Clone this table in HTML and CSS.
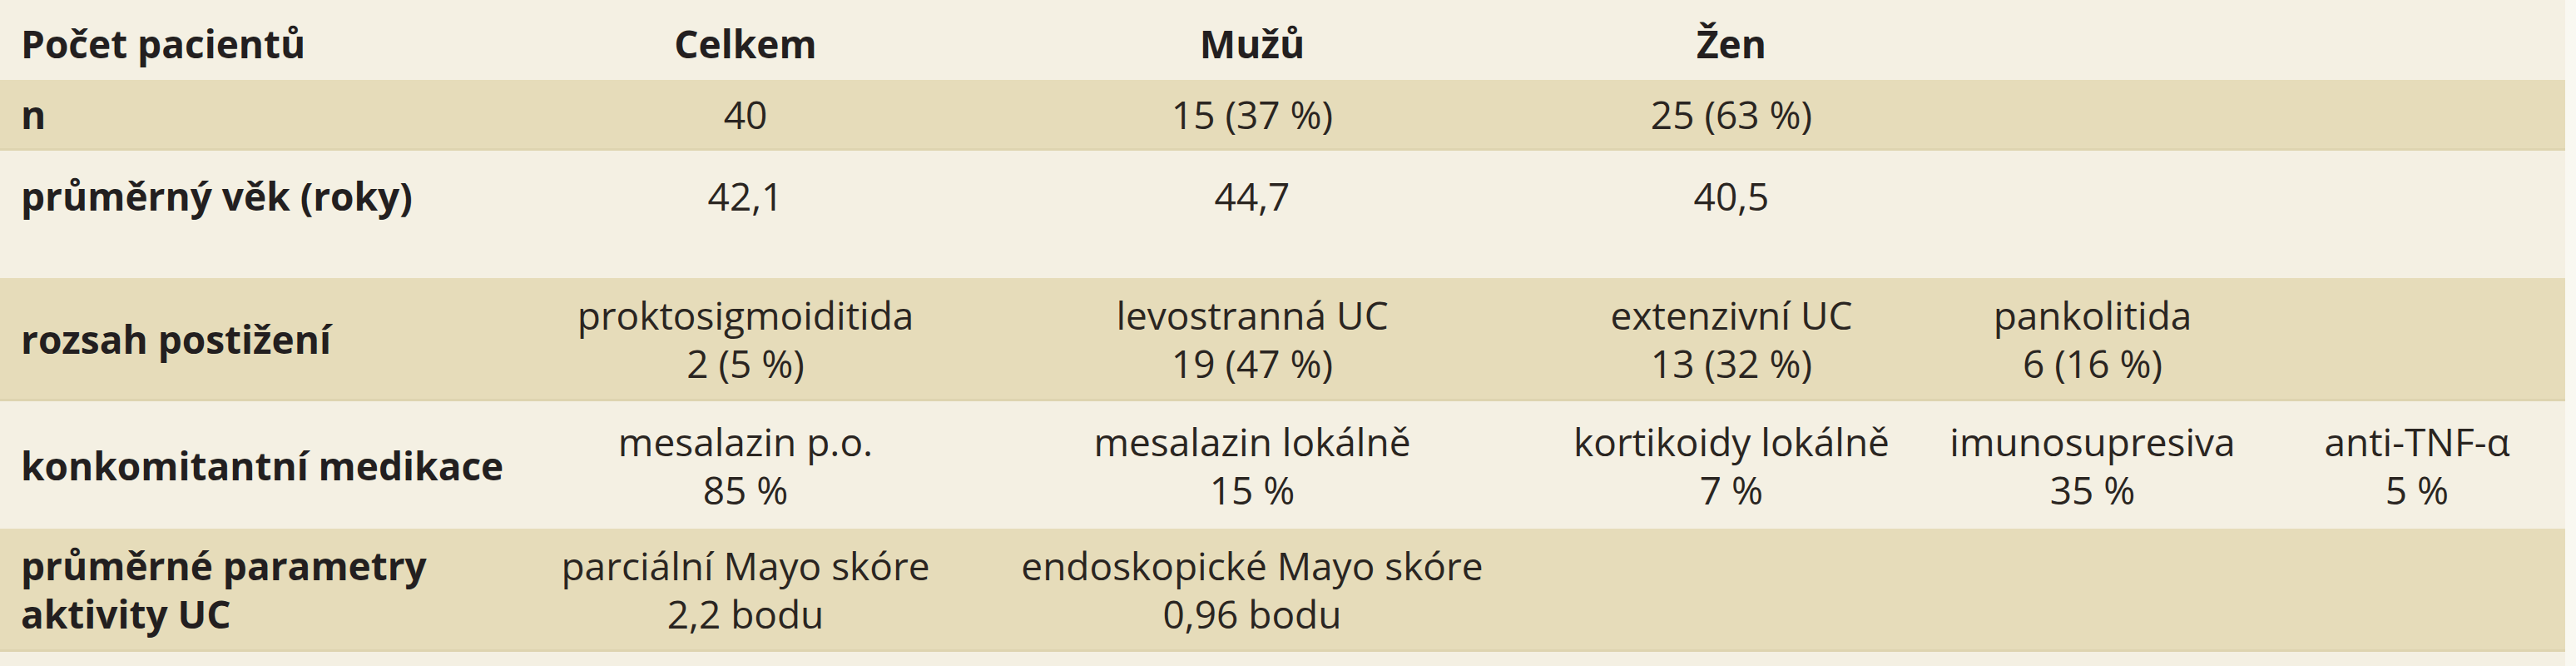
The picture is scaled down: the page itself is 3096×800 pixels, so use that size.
FILE: index.html
```html
<!DOCTYPE html>
<html lang="cs">
<head>
<meta charset="utf-8">
<title>Počet pacientů</title>
<link rel="stylesheet" href="styles.css">
</head>
<body>
<div class="table">
  <div class="row r-head light">
    <div class="cell label">Počet pacientů</div>
    <div class="cell head">Celkem</div>
    <div class="cell head">Mužů</div>
    <div class="cell head">Žen</div>
    <div class="cell"></div>
    <div class="cell"></div>
  </div>
  <div class="row r-n band">
    <div class="cell label">n</div>
    <div class="cell">40</div>
    <div class="cell">15 (37 %)</div>
    <div class="cell">25 (63 %)</div>
    <div class="cell"></div>
    <div class="cell"></div>
  </div>
  <div class="row r-age light">
    <div class="cell label">průměrný věk (roky)</div>
    <div class="cell">42,1</div>
    <div class="cell">44,7</div>
    <div class="cell">40,5</div>
    <div class="cell"></div>
    <div class="cell"></div>
  </div>
  <div class="row r-gap light"></div>
  <div class="row r-two band">
    <div class="cell label">rozsah postižení</div>
    <div class="cell">proktosigmoiditida<br>2 (5 %)</div>
    <div class="cell">levostranná UC<br>19 (47 %)</div>
    <div class="cell">extenzivní UC<br>13 (32 %)</div>
    <div class="cell">pankolitida<br>6 (16 %)</div>
    <div class="cell"></div>
  </div>
  <div class="row r-med light">
    <div class="cell label">konkomitantní medikace</div>
    <div class="cell">mesalazin p.o.<br>85 %</div>
    <div class="cell">mesalazin lokálně<br>15 %</div>
    <div class="cell">kortikoidy lokálně<br>7 %</div>
    <div class="cell">imunosupresiva<br>35 %</div>
    <div class="cell">anti-TNF-α<br>5 %</div>
  </div>
  <div class="row r-two band">
    <div class="cell label">průměrné parametry<br>aktivity UC</div>
    <div class="cell">parciální Mayo skóre<br>2,2 bodu</div>
    <div class="cell">endoskopické Mayo skóre<br>0,96 bodu</div>
    <div class="cell"></div>
    <div class="cell"></div>
    <div class="cell"></div>
  </div>
  <div class="row r-end light"></div>
</div>
</body>
</html>
```

FILE: styles.css
```css
html, body {
  margin: 0;
  padding: 0;
  background: #f9f8f1;
}

body {
  font-family: "Open Sans", "Liberation Sans", sans-serif;
  font-size: 46px;
  line-height: 58px;
  color: #2a2521;
}

.table {
  width: 3083px;
  display: flex;
  flex-direction: column;
}

.row {
  display: grid;
  grid-template-columns: 641px 510px 708px 444px 424px 356px;
  align-items: center;
  box-sizing: border-box;
}

.light {
  background: #f4f0e3;
}

.band {
  background: #e6dcba;
  border-bottom: 3px solid #ded4b0;
}

.cell {
  text-align: center;
  white-space: nowrap;
}

.label {
  text-align: left;
  padding-left: 25px;
  font-weight: 700;
  color: #231f20;
}

.head {
  font-weight: 700;
  color: #231f20;
}

.r-head { height: 96px; padding-top: 8px; }
.r-n { height: 85px; }
.r-age { height: 108px; }
.r-gap { height: 45px; }
.r-two { height: 148px; }
.r-med { height: 153px; }
.r-end { height: 17px; }
```
